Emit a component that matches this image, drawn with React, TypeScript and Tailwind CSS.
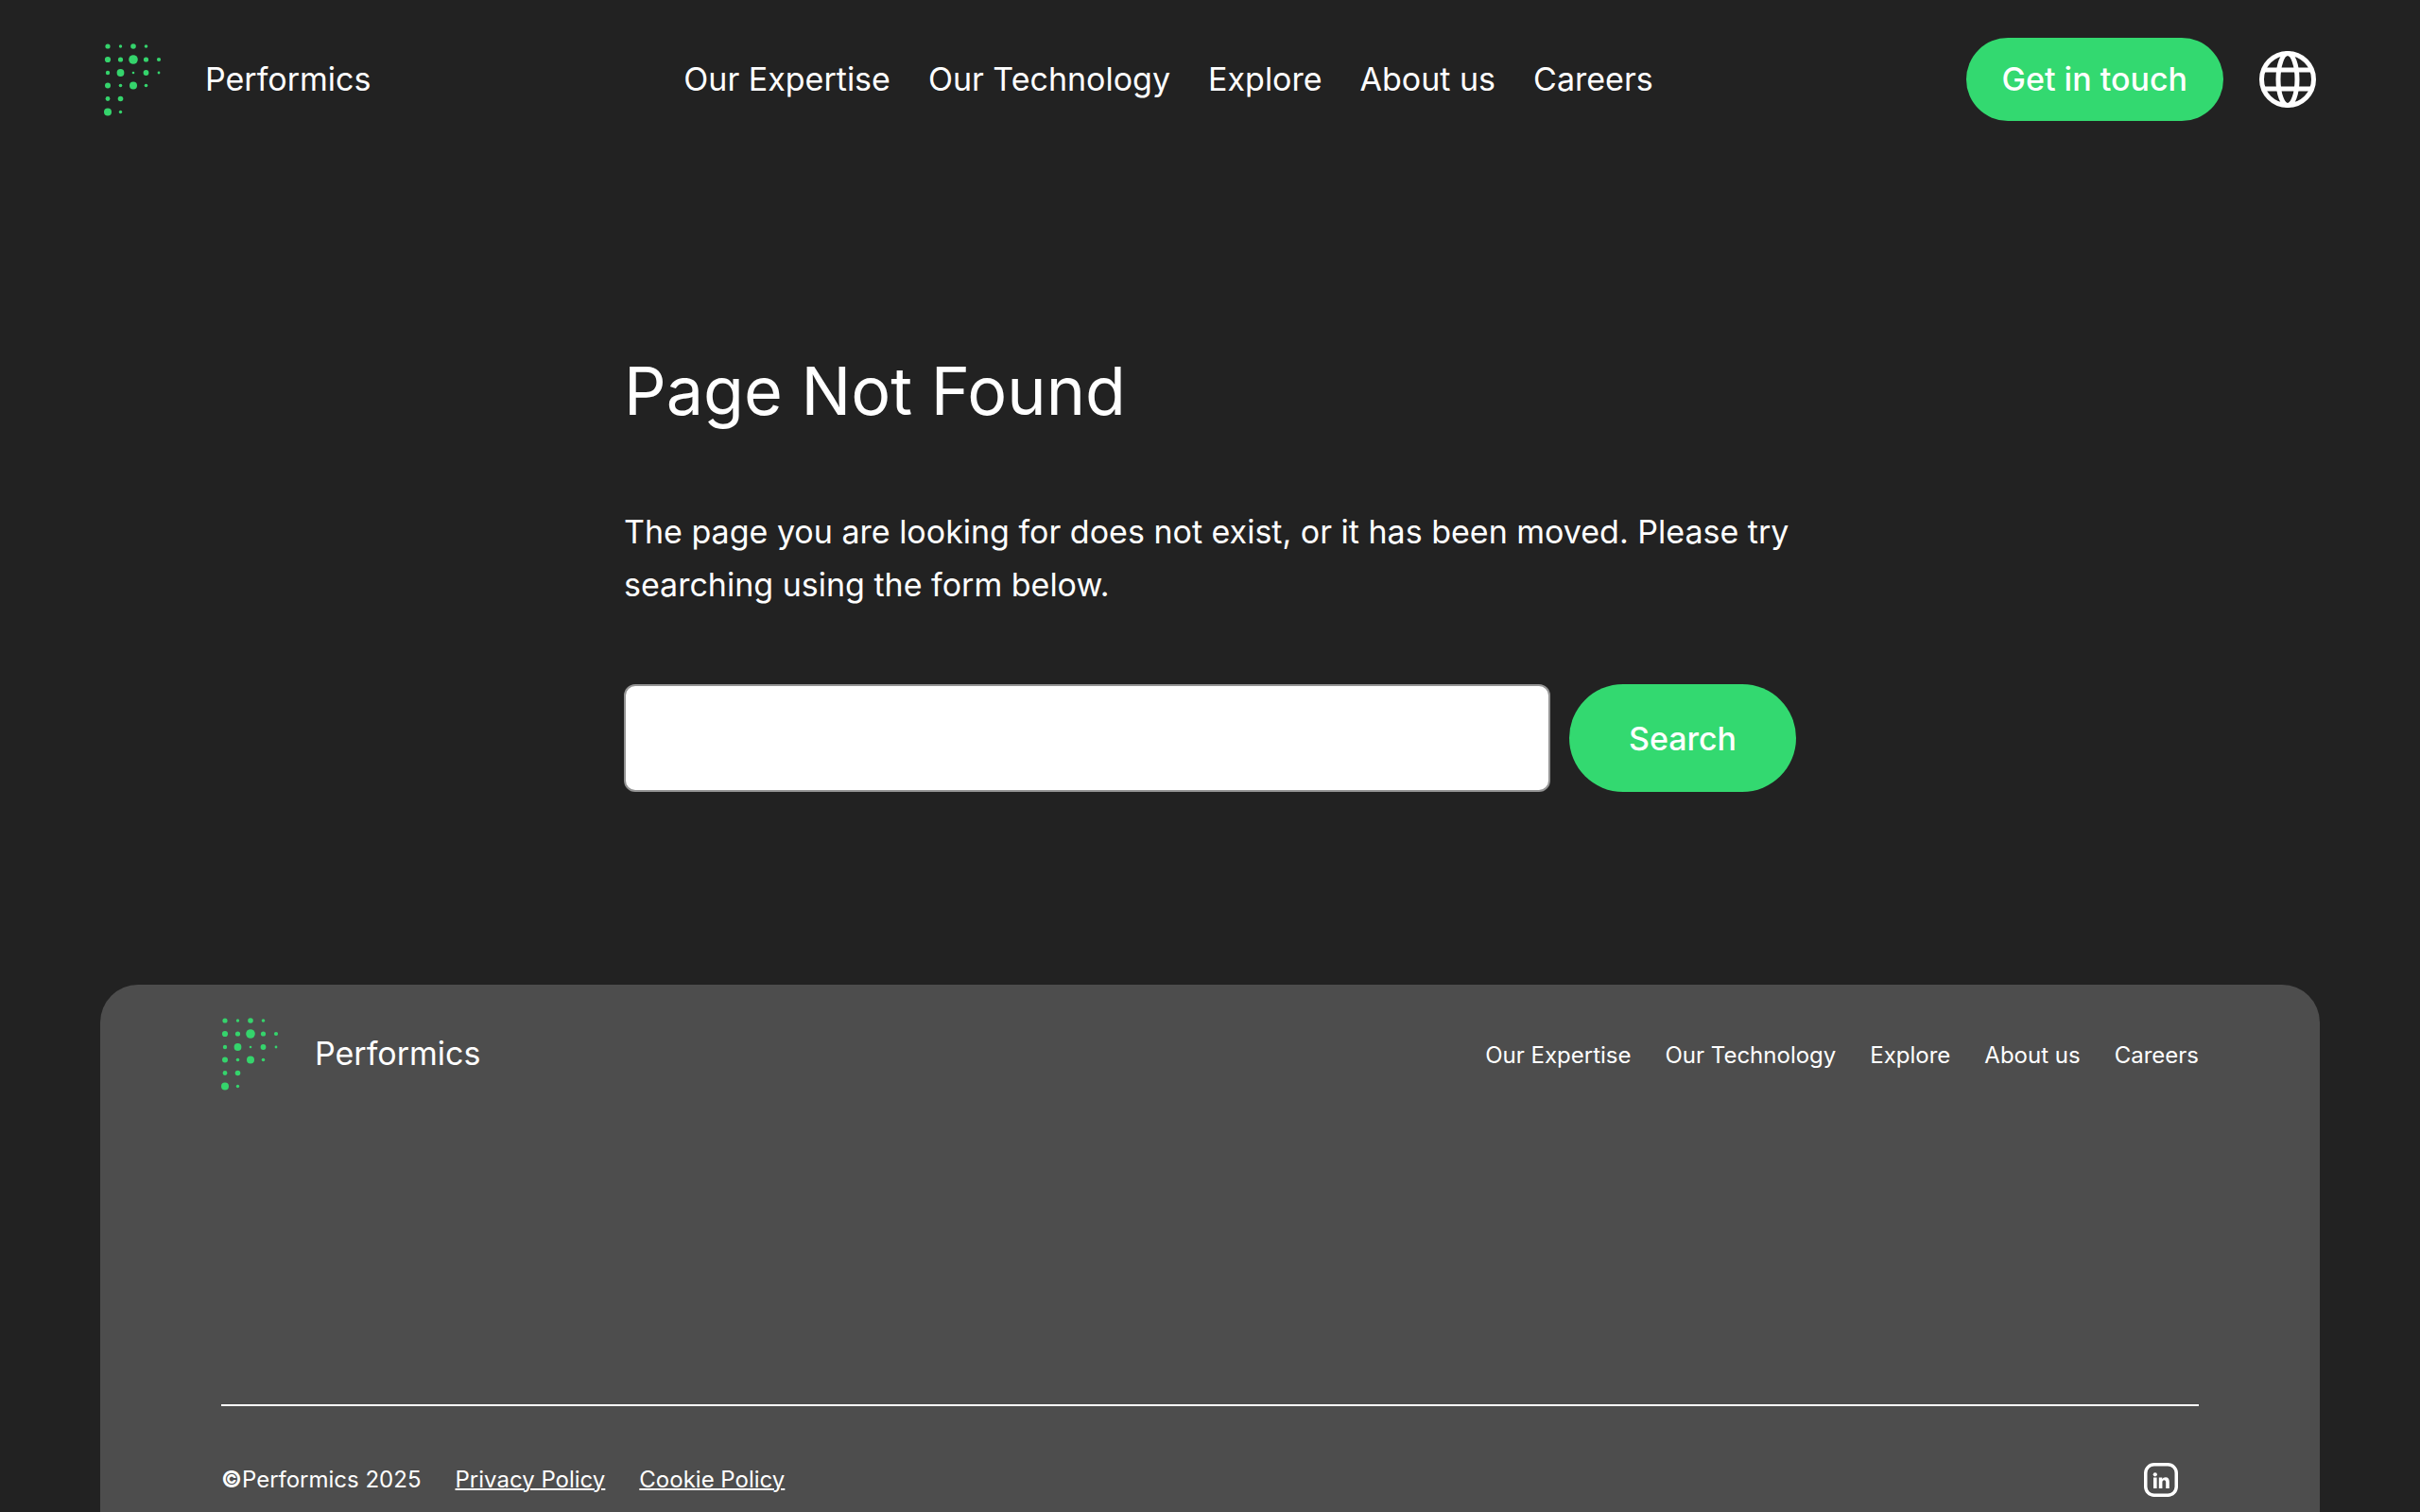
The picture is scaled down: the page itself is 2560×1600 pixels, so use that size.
import React from "react";

const NAV_ITEMS = ["Our Expertise", "Our Technology", "Explore", "About us", "Careers"];

// Dot grid of the brand mark: column centre, row centre, radius.
const DOTS: [number, number, number][] = [
  [4, 4, 2.6], [17.5, 4, 1.7], [31, 4, 2.8], [44.5, 4, 1.8],
  [4, 18, 3.1], [17.5, 18, 2.6], [31, 18, 4.8], [44.5, 18, 2.6], [58, 18, 2.1],
  [4, 32, 2.2], [17.5, 32, 3.9], [31, 32, 1.3], [44.5, 32, 2.9], [58, 32, 1.4],
  [4, 45.5, 3], [17.5, 45.5, 1.8], [31, 45.5, 4], [44.5, 45.5, 1.8],
  [4, 59.5, 2.4], [17.5, 59.5, 2.8],
  [4, 73.5, 4], [17.5, 73.5, 1.7],
];

function LogoMark() {
  return (
    <svg className="h-[78px] w-[61px] shrink-0" viewBox="0 0 61 78" fill="#35d46c" aria-hidden="true">
      {DOTS.map(([x, y, r]) => (
        <circle key={`${x}-${y}`} cx={x} cy={y} r={r} />
      ))}
    </svg>
  );
}

function GlobeIcon() {
  return (
    <svg className="size-[60px]" viewBox="0 0 60 60" fill="none" stroke="white" strokeWidth="5" aria-hidden="true">
      <circle cx="30" cy="30" r="27.5" />
      <ellipse cx="30" cy="30" rx="10" ry="27.5" />
      <path d="M4 20h52M4 40h52" />
    </svg>
  );
}

function LinkedInIcon() {
  return (
    <svg className="size-9" viewBox="0 0 36 36" fill="none" aria-hidden="true">
      <rect x="1.75" y="1.75" width="32.5" height="32.5" rx="9" stroke="white" strokeWidth="3.5" />
      <circle cx="11.8" cy="12.3" r="2.1" fill="white" />
      <path
        d="M10 15.6h3.6v11.4H10zM15.8 15.6h3.5v1.6c.7-1.1 1.9-1.9 3.6-1.9 2.6 0 3.9 1.7 3.9 4.6V27h-3.6v-6.3c0-1.5-.6-2.4-1.8-2.4-1.3 0-2 .9-2 2.4V27h-3.6z"
        fill="white"
      />
    </svg>
  );
}

export default function App() {
  return (
    <div className="min-h-screen bg-[#222222] font-['Inter',sans-serif] text-white">
      <header className="flex items-center justify-between px-[110px] pt-10">
        <a href="#home" className="flex items-center gap-[46px] text-[34px] leading-[56px]">
          <LogoMark />
          Performics
        </a>
        <nav aria-label="Main" className="flex gap-10 text-[34px] leading-[56px]">
          {NAV_ITEMS.map((item) => (
            <a key={item} href="#nav" className="whitespace-nowrap">{item}</a>
          ))}
        </nav>
        <div className="flex items-center gap-[38px]">
          <a
            href="#contact"
            className="flex h-[88px] items-center whitespace-nowrap rounded-full bg-[#33d970] px-[38px] text-[34px] font-medium leading-[56px]"
          >
            Get in touch
          </a>
          <button type="button" aria-label="Choose language">
            <GlobeIcon />
          </button>
        </div>
      </header>

      <main className="mx-auto w-full max-w-[1240px] pt-60 pb-[204px]">
        <h1 className="text-[70px] leading-[92px]">Page Not Found</h1>
        <p className="mt-[75px] text-[34px] leading-[56px]">
          The page you are looking for does not exist, or it has been moved. Please try searching using the form below.
        </p>
        <form role="search" className="mt-[77px] flex gap-5" onSubmit={(event) => event.preventDefault()}>
          <input
            type="search"
            aria-label="Search"
            className="h-[114px] min-w-0 flex-1 rounded-[12px] border-2 border-[#949494] bg-white px-4 text-[34px] text-black"
          />
          <button type="submit" className="h-[114px] w-60 rounded-full bg-[#33d970] text-[34px] font-medium">
            Search
          </button>
        </form>
      </main>

      <footer className="mx-[106px] rounded-t-[40px] bg-[#4d4d4d] px-32 pt-[34px]">
        <div className="flex items-center justify-between">
          <a href="#home" className="flex items-center gap-[38px] text-[34px] leading-[56px]">
            <LogoMark />
            Performics
          </a>
          <nav aria-label="Footer" className="flex gap-9 pt-1 text-[24px] leading-[40px]">
            {NAV_ITEMS.map((item) => (
              <a key={item} href="#nav" className="whitespace-nowrap">{item}</a>
            ))}
          </nav>
        </div>
        <div className="mt-[332px] flex items-center justify-between border-t-2 border-white pt-[58px] pb-[14px]">
          <div className="flex gap-9 text-[24px] leading-[40px]">
            <span><strong>©</strong>Performics 2025</span>
            <a href="#privacy" className="underline decoration-2">Privacy Policy</a>
            <a href="#cookies" className="underline decoration-2">Cookie Policy</a>
          </div>
          <a href="#linkedin" aria-label="LinkedIn" className="mr-[22px]">
            <LinkedInIcon />
          </a>
        </div>
      </footer>
    </div>
  );
}
